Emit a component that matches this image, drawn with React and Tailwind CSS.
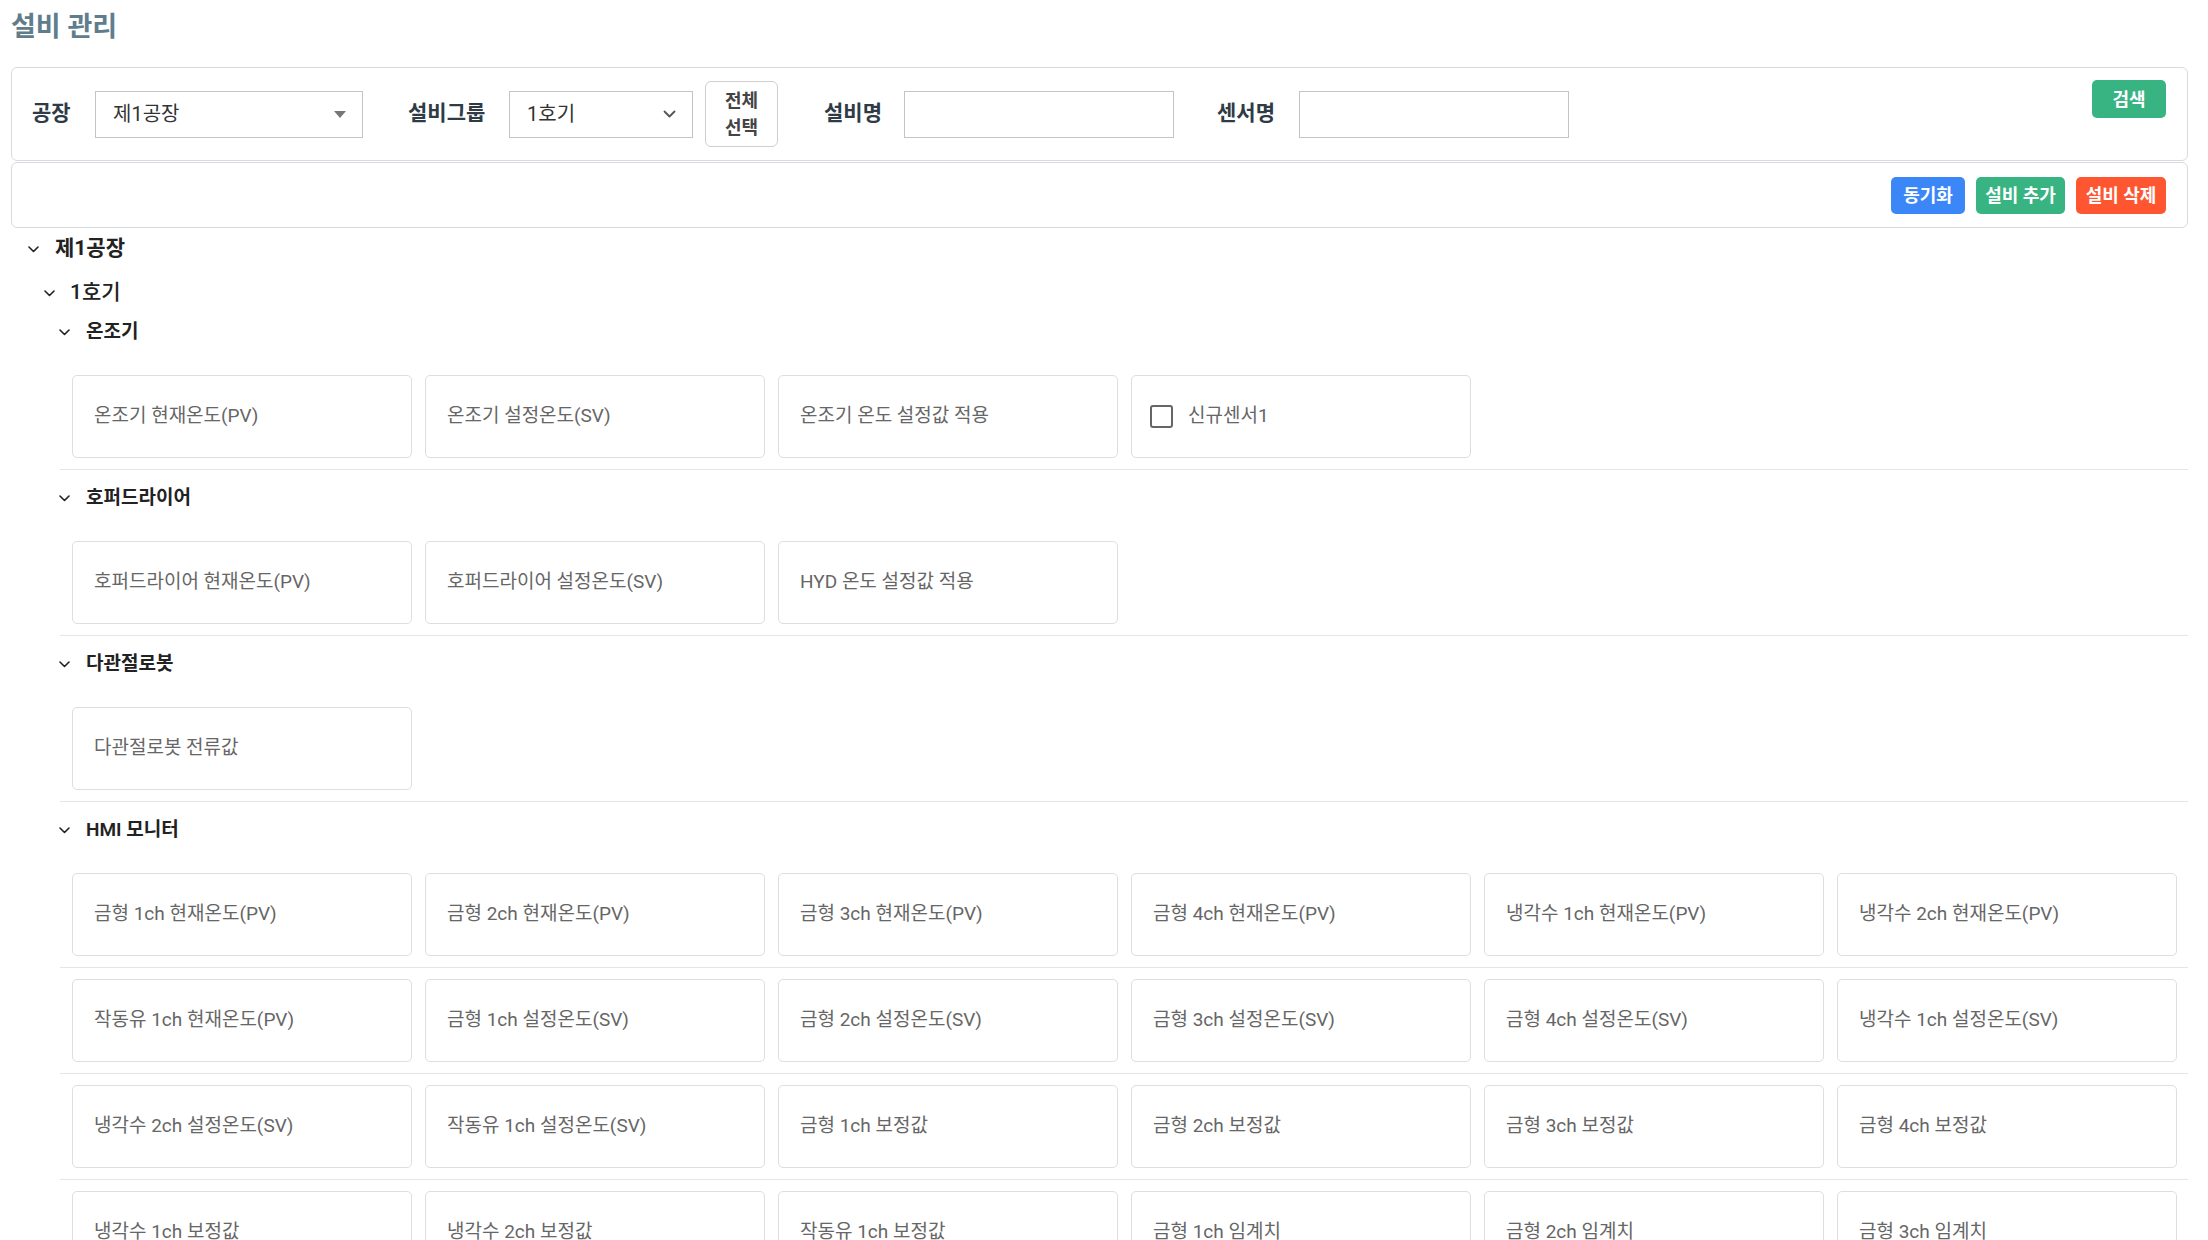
import React from 'react';

const SECTIONS = [
  {
    name: '온조기',
    rows: [
      [
        { label: '온조기 현재온도(PV)' },
        { label: '온조기 설정온도(SV)' },
        { label: '온조기 온도 설정값 적용' },
        { label: '신규센서1', checkbox: true },
      ],
    ],
  },
  {
    name: '호퍼드라이어',
    rows: [[{ label: '호퍼드라이어 현재온도(PV)' }, { label: '호퍼드라이어 설정온도(SV)' }, { label: 'HYD 온도 설정값 적용' }]],
  },
  {
    name: '다관절로봇',
    rows: [[{ label: '다관절로봇 전류값' }]],
  },
  {
    name: 'HMI 모니터',
    rows: [
      ['금형 1ch 현재온도(PV)', '금형 2ch 현재온도(PV)', '금형 3ch 현재온도(PV)', '금형 4ch 현재온도(PV)', '냉각수 1ch 현재온도(PV)', '냉각수 2ch 현재온도(PV)'],
      ['작동유 1ch 현재온도(PV)', '금형 1ch 설정온도(SV)', '금형 2ch 설정온도(SV)', '금형 3ch 설정온도(SV)', '금형 4ch 설정온도(SV)', '냉각수 1ch 설정온도(SV)'],
      ['냉각수 2ch 설정온도(SV)', '작동유 1ch 설정온도(SV)', '금형 1ch 보정값', '금형 2ch 보정값', '금형 3ch 보정값', '금형 4ch 보정값'],
      ['냉각수 1ch 보정값', '냉각수 2ch 보정값', '작동유 1ch 보정값', '금형 1ch 임계치', '금형 2ch 임계치', '금형 3ch 임계치'],
      ['금형 4ch 임계치', '냉각수 1ch 임계치', '냉각수 2ch 임계치', '작동유 1ch 임계치'],
    ].map((row) => row.map((label) => ({ label }))),
  },
];

function Chevron({ className = '' }) {
  return (
    <svg width="11" height="7" viewBox="0 0 11 7" className={className} fill="none">
      <polyline points="1,1 5.5,5.5 10,1" stroke="#222" strokeWidth="1.6" strokeLinecap="round" strokeLinejoin="round" />
    </svg>
  );
}

function SensorCard({ label, checkbox }) {
  return (
    <div className="w-[340px] h-[83px] shrink-0 flex items-center px-[21px] border border-[#dedede] rounded-[5px] bg-white text-[19px] text-[#666] whitespace-nowrap">
      {checkbox && <span className="w-[23px] h-[23px] -ml-[3px] mr-[15px] border-2 border-[#666] rounded-[3px]" />}
      <span>{label}</span>
    </div>
  );
}

function Section({ section, first }) {
  return (
    <div>
      <div className={`flex items-center h-[30px] -ml-px ${first ? 'mt-[8px]' : 'mt-[13px]'}`}>
        <Chevron />
        <span className="ml-[16px] text-[19px] font-semibold text-[#222]">{section.name}</span>
      </div>
      <div className="mt-[17px]">
        {section.rows.map((row, i) => (
          <div key={i} className="flex gap-[13px] pl-[12px] py-[11px] border-b border-[#e3e6e9]">
            {row.map((card, j) => (
              <SensorCard key={j} {...card} />
            ))}
          </div>
        ))}
      </div>
    </div>
  );
}

export default function App() {
  return (
    <div
      className="min-h-screen bg-white pl-[11px] pr-[20px] pt-[10px]"
      style={{ fontFamily: "Roboto, 'Noto Sans CJK KR', sans-serif" }}
    >
      <h1 className="h-[34px] leading-[34px] text-[27px] font-bold text-[#607d8b]">설비 관리</h1>

      {/* search panel */}
      <div className="mt-[23px] h-[94px] flex items-center border border-[#d7dbdf] rounded-[6px] pl-[20px] pr-[21px] whitespace-nowrap">
        <span className="w-[40px] text-[21px] font-bold text-[#2f3b46]">공장</span>
        <div className="ml-[23px] w-[268px] h-[47px] flex items-center justify-between border border-[#c4c4c4] pl-[17px] pr-[16px] text-[20px] text-[#333]">
          <span>제1공장</span>
          <svg width="12" height="7" viewBox="0 0 12 7">
            <polygon points="0,0 12,0 6,7" fill="#777" />
          </svg>
        </div>
        <span className="ml-[45px] w-[80px] text-[21px] font-bold text-[#2f3b46]">설비그룹</span>
        <div className="ml-[21px] w-[184px] h-[47px] flex items-center justify-between border border-[#c4c4c4] pl-[17px] pr-[16px] text-[20px] text-[#333]">
          <span>1호기</span>
          <svg width="13" height="8" viewBox="0 0 13 8" fill="none">
            <polyline points="1.5,1.5 6.5,6.5 11.5,1.5" stroke="#555" strokeWidth="1.8" strokeLinecap="round" strokeLinejoin="round" />
          </svg>
        </div>
        <button className="ml-[12px] w-[73px] h-[66px] flex flex-col items-center justify-center border border-[#cfcfcf] rounded-[6px] bg-white text-[18px] leading-[27px] font-semibold text-[#444]">
          <span>전체</span>
          <span>선택</span>
        </button>
        <span className="ml-[46px] w-[60px] text-[21px] font-bold text-[#2f3b46]">설비명</span>
        <div className="ml-[20px] w-[270px] h-[47px] border border-[#c4c4c4]" />
        <span className="ml-[43px] w-[62px] text-[21px] font-bold text-[#2f3b46]">센서명</span>
        <div className="ml-[20px] w-[270px] h-[47px] border border-[#c4c4c4]" />
        <button className="ml-auto self-start mt-[12px] w-[74px] h-[38px] rounded-[5px] bg-[#38b482] text-white text-[18px] font-bold">
          검색
        </button>
      </div>

      {/* action panel */}
      <div className="mt-[1px] h-[66px] flex items-center justify-end gap-[11px] border border-[#d7dbdf] rounded-[6px] pr-[21px]">
        <button className="w-[74px] h-[37px] rounded-[5px] bg-[#3b87f7] text-white text-[18px] font-bold">동기화</button>
        <button className="w-[89px] h-[37px] rounded-[5px] bg-[#38b482] text-white text-[18px] font-bold">설비 추가</button>
        <button className="w-[90px] h-[37px] rounded-[5px] bg-[#ff5632] text-white text-[18px] font-bold">설비 삭제</button>
      </div>

      {/* tree */}
      <div className="flex items-center h-[32px] mt-[5px] pl-[17px]">
        <Chevron />
        <span className="ml-[16px] text-[21px] font-bold text-[#222]">제1공장</span>
      </div>
      <div className="flex items-center h-[32px] mt-[12px] pl-[33px]">
        <Chevron />
        <span className="ml-[15px] text-[21px] font-medium text-[#222]">1호기</span>
      </div>
      <div className="ml-[49px] pb-[40px]">
        {SECTIONS.map((s, i) => (
          <Section key={s.name} section={s} first={i === 0} />
        ))}
      </div>
    </div>
  );
}
